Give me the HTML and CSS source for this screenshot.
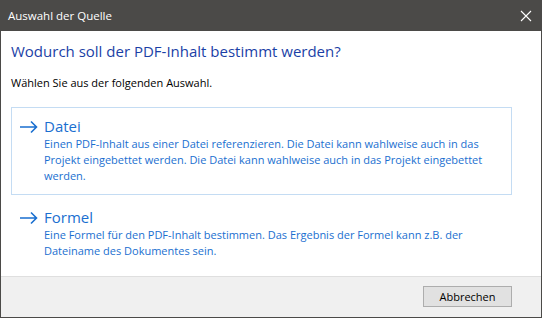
FILE: index.html
```html
<!DOCTYPE html>
<html>
<head>
  <title>Auswahl der Quelle</title>
  <link rel="stylesheet" href="styles.css">
</head>
<body>
  <div class="window">
    <div class="titlebar">
      <span class="titlebar-text">Auswahl der Quelle</span>
      <svg class="close" width="12" height="12" viewBox="0 0 12 12">
        <path d="M1 1 L11 11 M11 1 L1 11" stroke="#ffffff" stroke-width="1.1" fill="none"/>
      </svg>
    </div>

    <div class="content">
      <div class="main-instruction">Wodurch soll der PDF-Inhalt bestimmt werden?</div>
      <div class="instruction">Wählen Sie aus der folgenden Auswahl.</div>

      <div class="command-link selected">
        <svg class="arrow" width="20" height="14" viewBox="0 0 20 14">
          <path d="M1 7 H18 M12 1.5 L17.5 7 L12 12.5" stroke="#1a6fd0" stroke-width="1.6" fill="none"/>
        </svg>
        <div class="link-body">
          <div class="link-title">Datei</div>
          <div class="link-desc">Einen PDF-Inhalt aus einer Datei referenzieren. Die Datei kann wahlweise auch in das Projekt eingebettet werden. Die Datei kann wahlweise auch in das Projekt eingebettet werden.</div>
        </div>
      </div>

      <div class="command-link">
        <svg class="arrow" width="20" height="14" viewBox="0 0 20 14">
          <path d="M1 7 H18 M12 1.5 L17.5 7 L12 12.5" stroke="#1a6fd0" stroke-width="1.6" fill="none"/>
        </svg>
        <div class="link-body">
          <div class="link-title">Formel</div>
          <div class="link-desc">Eine Formel für den PDF-Inhalt bestimmen. Das Ergebnis der Formel kann z.B. der Dateiname des Dokumentes sein.</div>
        </div>
      </div>
    </div>

    <div class="footer">
      <button class="btn">Abbrechen</button>
    </div>
  </div>
</body>
</html>
```

FILE: styles.css
```css
:root {
  --frame: #4b4a48;
  --heading: #1b3fa6;
  --link: #1a6fd0;
  --link-border: #c4dcf3;
  --footer-bg: #f0f0f0;
  --footer-line: #dfdfdf;
}

html, body {
  margin: 0;
  padding: 0;
}

body {
  width: 542px;
  height: 318px;
  font-family: 'Open Sans', 'Noto Sans', Arial, sans-serif;
  font-size: 11px;
  color: #000000;
  background-color: #ffffff;
}

.window {
  box-sizing: border-box;
  height: 318px;
  display: flex;
  flex-direction: column;
  border: 1px solid var(--frame);
  border-top: none;
}

.titlebar {
  height: 31px;
  background-color: var(--frame);
  color: #ffffff;
  display: flex;
  align-items: center;
  justify-content: space-between;
  padding: 0 9px 0 8px;
  font-size: 11.5px;
  margin: 0 -1px;
}

.titlebar-text {
  margin-top: -1px;
}

.close {
  display: block;
  margin-right: 1px;
}

.content {
  flex: 1;
  padding: 10px 29px 0 10px;
}

.main-instruction {
  font-size: 15px;
  line-height: 21px;
  color: var(--heading);
}

.instruction {
  margin-top: 13px;
  line-height: 16px;
}

.command-link {
  display: flex;
  align-items: flex-start;
  margin-top: 16px;
  padding: 8px 10px 10px 7px;
  border: 1px solid transparent;
  color: var(--link);
}

.command-link.selected {
  border-color: var(--link-border);
}

.command-link + .command-link {
  margin-top: 0;
  padding-top: 11px;
}

.arrow {
  display: block;
  flex: none;
  margin-top: 4px;
  margin-right: 5px;
}

.link-title {
  font-size: 15px;
  line-height: 20px;
}

.link-desc {
  line-height: 16px;
}

.footer {
  height: 41px;
  box-sizing: border-box;
  background-color: var(--footer-bg);
  border-top: 1px solid var(--footer-line);
  display: flex;
  justify-content: flex-end;
  align-items: flex-start;
  padding: 9px 29px 0 0;
}

.btn {
  width: 89px;
  height: 21px;
  padding: 0;
  font-family: inherit;
  font-size: 11px;
  color: #000000;
  background-color: #e1e1e1;
  border: 1px solid #adadad;
  border-radius: 0;
}
```
